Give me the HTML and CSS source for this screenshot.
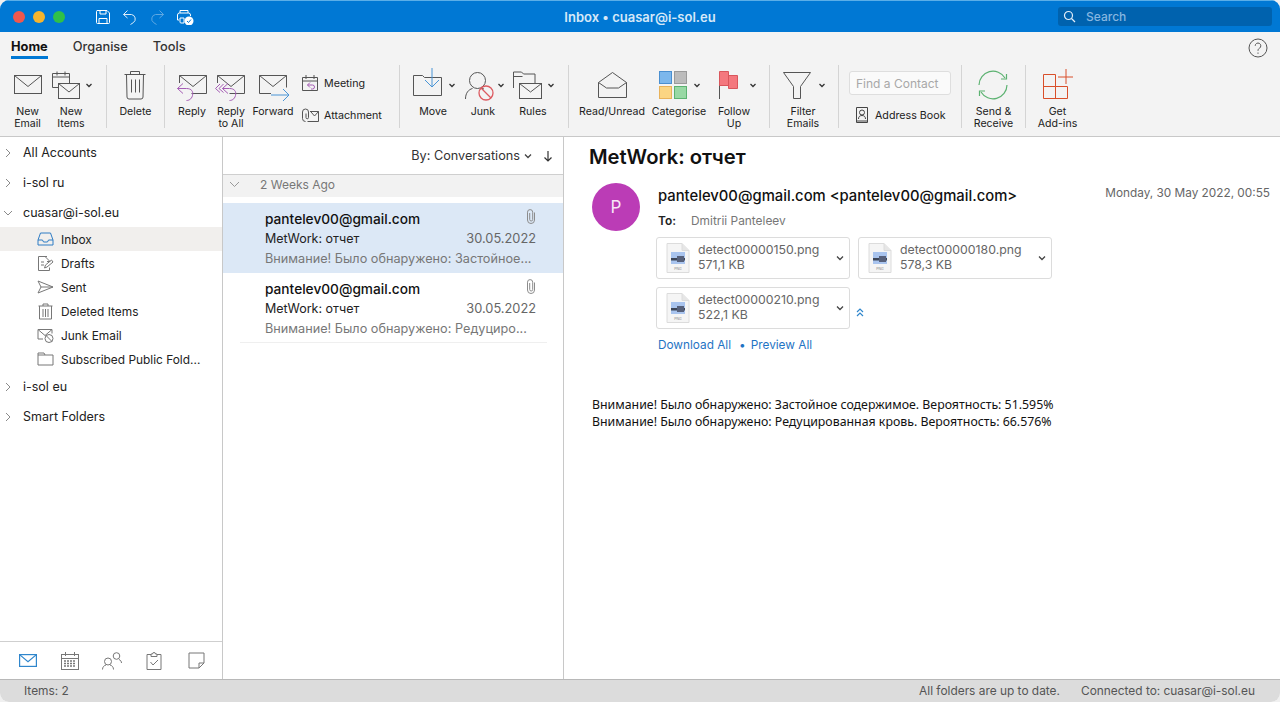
FILE: index.html
```html
<!DOCTYPE html>
<html>
<head>
    <title>Inbox - cuasar@i-sol.eu</title>
    <link rel="stylesheet" href="styles.css">
</head>
<body>
<svg class="defs" width="0" height="0">
    <symbol id="png-file" viewBox="0 0 24 30">
        <path d="M1 .5h15l7 7v22H1z" fill="#f5f5f5" stroke="#dcdcdc"/>
        <path d="M16 .5v7h7" fill="#e6e6e6" stroke="#dcdcdc"/>
        <rect x="5" y="9" width="14" height="12" fill="#a9c4ee"/>
        <rect x="5" y="15" width="14" height="2.5" fill="#3d4658"/>
        <rect x="11" y="13" width="7" height="6" fill="#56607a"/>
    </symbol>
    <symbol id="clip" viewBox="0 0 10 15">
        <path d="M8.500 3.500v7.500a3.500 3.500 0 0 1-7 0V3.200a2.600 2.600 0 0 1 5.200 0V10.500a1.500 1.500 0 0 1-3 0V4" fill="none" stroke="#8c8c8c"/>
    </symbol>
    <symbol id="chev" viewBox="0 0 8 6">
        <path d="M1 1.500l3 3 3-3" fill="none" stroke="#444" stroke-width="1.300"/>
    </symbol>
</svg>

<div class="app">
    <header class="titlebar">
        <div class="lights">
            <span class="light red"></span>
            <span class="light yellow"></span>
            <span class="light green"></span>
        </div>
        <div class="quick">
            <svg width="16" height="16" viewBox="0 0 16 16" fill="none" stroke="#fff"><path d="M2 1.500h10l2.500 2.500v9.500a1 1 0 0 1-1 1h-11a1 1 0 0 1-1-1v-11a1 1 0 0 1 1-1z"/><path d="M5 1.500v3.500h6v-3.500M4 14.500v-5h8v5"/></svg>
            <svg width="16" height="16" viewBox="0 0 16 16" fill="none" stroke="#dcecf9"><path d="M1.500 5.500l4-4M1.500 5.500l4 3.500M1.500 5.500h8a4.500 4.500 0 0 1 2 8l-3 2"/></svg>
            <svg class="dim" width="16" height="16" viewBox="0 0 16 16" fill="none" stroke="#5fa8e2"><path d="M14.500 5.500l-4-4M14.500 5.500l-4 3.500M14.500 5.500h-8a4.500 4.500 0 0 0-2 8l3 2"/></svg>
            <svg width="18" height="16" viewBox="0 0 18 16" fill="none" stroke="#fff"><path d="M4 4v-2.500h8v2.500M3 11h-1.500v-5a2 2 0 0 1 2-2h9a2 2 0 0 1 2 2v1M4 9h4v5h-3a1 1 0 0 1-1-1z"/><circle cx="13" cy="12" r="4.500" fill="#fff" stroke="none"/><path d="M11 12l1.500 1.500 2.500-3" stroke="#0078d4"/></svg>
        </div>
        <div class="title">Inbox • cuasar@i-sol.eu</div>
        <div class="search">
            <svg width="13" height="13" viewBox="0 0 13 13" fill="none" stroke="#e4effa" stroke-width="1.200"><circle cx="5.500" cy="5.500" r="4"/><path d="M8.500 8.500l3.500 3.500"/></svg>
            <span>Search</span>
        </div>
    </header>

    <section class="ribbon">
        <nav class="tabs">
            <a class="tab active">Home</a>
            <a class="tab">Organise</a>
            <a class="tab">Tools</a>
            <svg class="help" width="20" height="20" viewBox="0 0 20 20" fill="none" stroke="#555"><circle cx="10" cy="10" r="9"/><path d="M7.200 7.800a2.800 2.800 0 1 1 4.300 2.400c-1 .7-1.500 1.200-1.500 2.600"/><path d="M10 14.500v1.300"/></svg>
        </nav>
        <div class="toolbar">
            <div class="rb-group g-new">
                <div class="rb-btn w39">
                    <svg viewBox="8 66 39 39" fill="none" stroke="#555"><rect x="14.500" y="75.500" width="27" height="18"/><path d="M14.500 75.500l13.500 11 13.500-11"/></svg>
                    <span>New<br>Email</span>
                </div>
                <div class="rb-btn w48">
                    <svg viewBox="47 66 48 39" fill="none" stroke="#555"><path d="M58 87.500h-5.500v-14h17v9.500M52.500 77h17M57 71.500v4M65 71.500v4"/><rect x="58.500" y="83.500" width="21" height="15" fill="#f4f4f4"/><path d="M58.500 83.500l10.500 8.500 10.500-8.500"/><path d="M86.500 84l2.500 2.500 2.500-2.500" stroke="#333" stroke-width="1.300"/></svg>
                    <span>New<br>Items</span>
                </div>
            </div>
            <div class="rb-group g-delete">
                <div class="rb-btn w57">
                    <svg viewBox="107 66 57 39" fill="none" stroke="#555"><path d="M124.500 74.500h21M130.500 74.500v-3h9v3M126.500 74.500l.5 22.500a2 2 0 0 0 2 2h12a2 2 0 0 0 2-2l.5-22.500M131.500 79.500v13M135.500 79.500v13M139.500 79.500v13"/></svg>
                    <span>Delete</span>
                </div>
            </div>
            <div class="rb-group g-respond">
                <div class="rb-btn w40">
                    <svg viewBox="172 66 40 39" fill="none"><path d="M179.500 83v-7.500h27v18h-15M179.500 75.500l13.500 11 13.500-11" stroke="#555"/><path d="M183 83.500l-5.500 5 5.500 5M177.500 88.500h9c5 0 7 3 6 7s-4 5-6 5" stroke="#a55db5"/></svg>
                    <span>Reply</span>
                </div>
                <div class="rb-btn w38">
                    <svg viewBox="212 66 38 39" fill="none"><path d="M217.500 83v-7.500h27v18h-15M217.500 75.500l13.500 11 13.500-11" stroke="#555"/><path d="M220 84l-4.500 4.500 4.500 4M223.500 84l-4.500 4.500 4.500 4M228 83.500l-5.500 5 5.500 5M222.500 88.500h7c5 0 7 3 6 7s-4 5-6 5" stroke="#a55db5"/></svg>
                    <span>Reply<br>to All</span>
                </div>
                <div class="rb-btn w46">
                    <svg viewBox="250 66 46 39" fill="none"><path d="M271 93.500h-11.500v-18h27v12M259.500 75.500l13.500 11 13.500-11" stroke="#555"/><path d="M271 95h17.500M283 89l6 6-6 6" stroke="#4a95d6"/></svg>
                    <span>Forward</span>
                </div>
                <div class="small-col">
                    <div class="small-btn">
                        <svg width="18" height="18" viewBox="0 0 18 18" fill="none" stroke="#555"><path d="M1.500 3.500h15v13h-15zM1.500 7h15M5 1v4M13 1v4"/><path d="M9 8.500l-2.500 2.500 2.500 2.500M6.500 11h5a1.500 1.500 0 0 1 0 4h-1.500" stroke="#a55db5"/></svg>
                        <span>Meeting</span>
                    </div>
                    <div class="small-btn">
                        <svg width="18" height="18" viewBox="0 0 18 18" fill="none" stroke="#555"><path d="M9 5.500h8.500v10h-11M10 6l3.500 4 4-4.500"/><path d="M5 7.500v4a1 1 0 0 0 2.500 0V6a3 3 0 0 0-6 0v6.500a3 3 0 0 0 3 3"/></svg>
                        <span>Attachment</span>
                    </div>
                </div>
            </div>
            <div class="rb-group g-move">
                <div class="rb-btn w66">
                    <svg viewBox="400 66 66 39" fill="none"><path d="M413.500 95.500v-20h9l2 2h17v18z" stroke="#555"/><path d="M432 68v18M425 80l7 7 7-7" stroke="#4a95d6"/><path d="M449.500 84l2.500 2.500 2.500-2.500" stroke="#333" stroke-width="1.300"/></svg>
                    <span>Move</span>
                </div>
                <div class="rb-btn w34">
                    <svg viewBox="466 66 34 39" fill="none"><circle cx="477.500" cy="80.500" r="8" stroke="#555"/><path d="M465.500 99c0-6 3-9.500 7-10.500M482 88.500l2 .5" stroke="#555"/><circle cx="486" cy="93" r="7" stroke="#dc5a60" stroke-width="1.300"/><path d="M481 88l10 10" stroke="#dc5a60" stroke-width="1.300"/><path d="M498.500 84l2.500 2.500 2.500-2.500" stroke="#333" stroke-width="1.300"/></svg>
                    <span>Junk</span>
                </div>
                <div class="rb-btn w66">
                    <svg viewBox="500 66 66 39" fill="none" stroke="#555"><path d="M513.500 88v-16h8l2 2h11.500v9"/><path d="M513.500 76.500h9"/><rect x="519.500" y="83.500" width="22" height="15" fill="#f4f4f4"/><path d="M519.500 83.500l11 8.500 11-8.500"/><path d="M548.500 84l2.500 2.500 2.500-2.500" stroke="#333" stroke-width="1.300"/></svg>
                    <span>Rules</span>
                </div>
            </div>
            <div class="rb-group g-tags">
                <div class="rb-btn w80">
                    <svg viewBox="572 66 80 39" fill="none" stroke="#555"><path d="M598.500 97.500v-15l14-10 14 10v15z"/><path d="M598.500 82.500l8 5.500h12l8-5.500"/></svg>
                    <span>Read/Unread</span>
                </div>
                <div class="rb-btn w54">
                    <svg viewBox="652 66 54 39"><rect x="659.500" y="71.500" width="12" height="12" fill="#7cb7ec" stroke="#4a8fd0"/><rect x="674.500" y="71.500" width="12" height="12" fill="#bcbcbc" stroke="#9a9a9a"/><rect x="659.500" y="86.500" width="12" height="12" fill="#fbd583" stroke="#e8b25a"/><rect x="674.500" y="86.500" width="12" height="12" fill="#98d8a4" stroke="#5cb271"/><path d="M694.500 84l2.500 2.500 2.500-2.500" fill="none" stroke="#333" stroke-width="1.300"/></svg>
                    <span>Categorise</span>
                </div>
                <div class="rb-btn w56">
                    <svg viewBox="706 66 56 39" fill="none"><path d="M719.500 72v27" stroke="#555"/><path d="M728.500 75.500h9v13h-9z" fill="#f4787e" stroke="#d9565c"/><path d="M719.500 71.500h9v14h-9z" fill="#f4787e" stroke="#d9565c"/><path d="M750.500 84l2.500 2.500 2.500-2.500" stroke="#333" stroke-width="1.300"/></svg>
                    <span>Follow<br>Up</span>
                </div>
            </div>
            <div class="rb-group g-filter">
                <div class="rb-btn w66">
                    <svg viewBox="770 66 66 39" fill="none"><path d="M783.500 72.500h27l-10 14v12h-7v-12z" stroke="#555"/><path d="M819.500 84l2.500 2.500 2.500-2.500" stroke="#333" stroke-width="1.300"/></svg>
                    <span>Filter<br>Emails</span>
                </div>
            </div>
            <div class="rb-group g-find">
                <div class="find-box">Find a Contact</div>
                <div class="small-btn">
                    <svg width="14" height="18" viewBox="0 0 14 18" fill="none" stroke="#444"><path d="M1.500 1.500h11v13.500h-11zM1.500 15v1.500h11V15"/><circle cx="7" cy="6.500" r="2.500"/><path d="M3.500 13c0-2.500 1.500-3.500 3.500-3.500s3.500 1 3.500 3.500"/></svg>
                    <span>Address Book</span>
                </div>
            </div>
            <div class="rb-group g-send">
                <div class="rb-btn w63">
                    <svg viewBox="962 66 63 39" fill="none" stroke="#5cb271" stroke-width="1.200"><path d="M979 85a14 14 0 0 1 26-7M1007 85a14 14 0 0 1-26 7"/><path d="M1006.500 74v5h-5.500M979.500 96v-5h5.500"/></svg>
                    <span>Send &amp;<br>Receive</span>
                </div>
            </div>
            <div class="rb-group g-addins">
                <div class="rb-btn w63">
                    <svg viewBox="1026 66 63 39" fill="none" stroke="#d94f2a"><path d="M1043.500 74.500h12v12h12v12h-24zM1043.500 86.500h12v12"/><path d="M1066 69v15M1058 77h15"/></svg>
                    <span>Get<br>Add-ins</span>
                </div>
            </div>
        </div>
    </section>

    <main class="panes">
        <aside class="sidebar">
            <div class="tree">
                <div class="account"><svg width="6" height="10" viewBox="0 0 6 10" fill="none" stroke="#8a8a8a"><path d="M1 1l4 4-4 4"/></svg><span>All Accounts</span></div>
                <div class="account"><svg width="6" height="10" viewBox="0 0 6 10" fill="none" stroke="#8a8a8a"><path d="M1 1l4 4-4 4"/></svg><span>i-sol ru</span></div>
                <div class="account open"><svg width="10" height="6" viewBox="0 0 10 6" fill="none" stroke="#8a8a8a"><path d="M1 1l4 4 4-4"/></svg><span>cuasar@i-sol.eu</span></div>
                <div class="folder selected">
                    <svg width="17" height="14" viewBox="0 0 17 14" fill="none" stroke="#2f7cc4"><path d="M1 8l2.500-7h10l2.500 7v5h-15zM1 8h4.500l1 2h4l1-2h4.500"/></svg>
                    <span>Inbox</span>
                </div>
                <div class="folder">
                    <svg width="17" height="17" viewBox="0 0 17 17" fill="none" stroke="#777"><path d="M10 1.500h-8.500v14h11v-3M8 1.500l5 5h-3"/><path d="M4 7h3M4 10h3M7.500 13l1-3 6-5 1.500 2-6 5z"/></svg>
                    <span>Drafts</span>
                </div>
                <div class="folder">
                    <svg width="17" height="14" viewBox="0 0 17 14" fill="none" stroke="#777"><path d="M1 1l15 6-15 6 3-6zM4 7h12"/></svg>
                    <span>Sent</span>
                </div>
                <div class="folder">
                    <svg width="15" height="17" viewBox="0 0 15 17" fill="none" stroke="#777"><path d="M.5 3h14M5 3v-2h5v2M1.500 3v13h12v-13M5 6v8M7.500 6v8M10 6v8"/></svg>
                    <span>Deleted Items</span>
                </div>
                <div class="folder">
                    <svg width="17" height="15" viewBox="0 0 17 15" fill="none" stroke="#777"><path d="M6 11h-5v-9.500h14v4M1 1.500l7 6 7-6"/><circle cx="12" cy="10.500" r="4"/><path d="M9 7.500l6 6"/></svg>
                    <span>Junk Email</span>
                </div>
                <div class="folder">
                    <svg width="17" height="14" viewBox="0 0 17 14" fill="none" stroke="#777"><path d="M1 13v-12h6l1 2h8v10zM1 3h7"/></svg>
                    <span>Subscribed Public Fold...</span>
                </div>
                <div class="account"><svg width="6" height="10" viewBox="0 0 6 10" fill="none" stroke="#8a8a8a"><path d="M1 1l4 4-4 4"/></svg><span>i-sol eu</span></div>
                <div class="account"><svg width="6" height="10" viewBox="0 0 6 10" fill="none" stroke="#8a8a8a"><path d="M1 1l4 4-4 4"/></svg><span>Smart Folders</span></div>
            </div>
            <div class="switcher">
                <svg width="18" height="13" viewBox="0 0 18 13" fill="none" stroke="#2f86cc" stroke-width="1.200"><rect x=".6" y=".6" width="16.800" height="11.800"/><path d="M.6.600l8.400 7 8.400-7"/></svg>
                <svg width="18" height="18" viewBox="0 0 18 18" fill="none" stroke="#777"><rect x=".5" y="2.500" width="17" height="15"/><path d="M.5 6.500h17M4.500 0v4M13.500 0v4"/><path d="M3 9h12M3 11.500h12M3 14h12" stroke-dasharray="2 1" stroke-width="1.500"/></svg>
                <svg width="20" height="18" viewBox="0 0 20 18" fill="none" stroke="#777"><circle cx="6" cy="9.500" r="3.500"/><path d="M.5 17.500c0-2.500 1.500-4 3.500-4.500M11.500 17.500c0-2.500-1.500-4-3.500-4.500"/><circle cx="14.500" cy="4" r="3.300"/><path d="M17 7.500c1.500.5 2.500 2 2.500 3.500"/></svg>
                <svg width="16" height="18" viewBox="0 0 16 18" fill="none" stroke="#777"><path d="M5 2.500h-4v15h14v-15h-4M5 4.500v-2.500h1.500a1.500 1.500 0 0 1 3 0h1.500v2.500z"/><path d="M4.500 10l2.500 3 5-5"/></svg>
                <svg width="17" height="17" viewBox="0 0 17 17" fill="none" stroke="#777"><path d="M1 1h15v10l-5 5h-10zM16 11h-5v5"/></svg>
            </div>
        </aside>

        <section class="list">
            <div class="list-head">
                <span>By: Conversations</span>
                <svg width="8" height="6"><use href="#chev"/></svg>
                <svg class="sort" width="10" height="12" viewBox="0 0 10 12" fill="none" stroke="#333" stroke-width="1.200"><path d="M5 1v10M1.500 7.500l3.500 3.500 3.500-3.500"/></svg>
            </div>
            <div class="group-row">
                <svg width="11" height="7" viewBox="0 0 11 7" fill="none" stroke="#999"><path d="M1 1l4.500 4.500 4.500-4.500"/></svg>
                <span>2 Weeks Ago</span>
            </div>
            <div class="msg selected">
                <div class="msg-top"><span class="sender">pantelev00@gmail.com</span><svg width="10" height="15"><use href="#clip"/></svg></div>
                <div class="msg-mid"><span>MetWork: отчет</span><span class="msg-date">30.05.2022</span></div>
                <div class="msg-preview">Внимание! Было обнаружено: Застойное...</div>
            </div>
            <div class="msg">
                <div class="msg-top"><span class="sender">pantelev00@gmail.com</span><svg width="10" height="15"><use href="#clip"/></svg></div>
                <div class="msg-mid"><span>MetWork: отчет</span><span class="msg-date">30.05.2022</span></div>
                <div class="msg-preview">Внимание! Было обнаружено: Редуциро...</div>
            </div>
        </section>

        <article class="reader">
            <h1 class="subject">MetWork: отчет</h1>
            <div class="mail-head">
                <div class="avatar">P</div>
                <div class="mail-info">
                    <div class="from-row">
                        <span class="from">pantelev00@gmail.com &lt;pantelev00@gmail.com&gt;</span>
                        <span class="sent-date">Monday, 30 May 2022, 00:55</span>
                    </div>
                    <div class="to-row"><b>To:</b><span>Dmitrii Panteleev</span></div>
                    <div class="attachments">
                        <div class="att">
                            <svg width="24" height="30" viewBox="0 0 24 30"><use href="#png-file" width="24" height="30"/><text x="12" y="27" class="png-label">PNG</text></svg>
                            <div class="att-text"><div>detect00000150.png</div><div>571,1 KB</div></div>
                            <svg class="att-chev" width="8" height="6"><use href="#chev"/></svg>
                        </div>
                        <div class="att">
                            <svg width="24" height="30" viewBox="0 0 24 30"><use href="#png-file" width="24" height="30"/><text x="12" y="27" class="png-label">PNG</text></svg>
                            <div class="att-text"><div>detect00000180.png</div><div>578,3 KB</div></div>
                            <svg class="att-chev" width="8" height="6"><use href="#chev"/></svg>
                        </div>
                        <div class="att">
                            <svg width="24" height="30" viewBox="0 0 24 30"><use href="#png-file" width="24" height="30"/><text x="12" y="27" class="png-label">PNG</text></svg>
                            <div class="att-text"><div>detect00000210.png</div><div>522,1 KB</div></div>
                            <svg class="att-chev" width="8" height="6"><use href="#chev"/></svg>
                        </div>
                        <svg class="collapse" width="8" height="9" viewBox="0 0 8 9" fill="none" stroke="#2f86cc" stroke-width="1.200"><path d="M1 4l3-3 3 3M1 8l3-3 3 3"/></svg>
                    </div>
                    <div class="att-links"><a>Download All</a><i>•</i><a>Preview All</a></div>
                </div>
            </div>
            <div class="mail-body">
                <p>Внимание! Было обнаружено: Застойное содержимое. Вероятность: 51.595%</p>
                <p>Внимание! Было обнаружено: Редуцированная кровь. Вероятность: 66.576%</p>
            </div>
        </article>
    </main>

    <footer class="statusbar">
        <span class="items">Items: 2</span>
        <span class="sync">All folders are up to date.</span>
        <span class="conn">Connected to: cuasar@i-sol.eu</span>
    </footer>
</div>
</body>
</html>
```

FILE: styles.css
```css
* {
    box-sizing: border-box;
}

html, body {
    margin: 0;
    height: 100%;
    overflow: hidden;
    background: #f0f0f0;
}

body {
    font-family: Inter, "Noto Sans", sans-serif;
    font-size: 12px;
    color: #222;
}

.defs {
    position: absolute;
}

.png-label {
    font-size: 3.5px;
    fill: #888;
    text-anchor: middle;
}

.app {
    display: flex;
    flex-direction: column;
    height: 702px;
    background: #fff;
    border-radius: 9px;
    overflow: hidden;
}

/* title bar */
.titlebar {
    position: relative;
    display: flex;
    align-items: center;
    flex: 0 0 32px;
    background: #0078d4;
    border-top: 1px solid #5aaee8;
    color: #fff;
}

.lights {
    display: flex;
    gap: 8px;
    margin-left: 13px;
}

.light {
    width: 12px;
    height: 12px;
    border-radius: 50%;
}

.red { background: #f0584e; }
.yellow { background: #f6b52e; }
.green { background: #30c048; }

.quick {
    display: flex;
    align-items: center;
    gap: 11px;
    margin-left: 30px;
}

.title {
    position: absolute;
    left: 0;
    right: 0;
    text-align: center;
    font-size: 13px;
    font-weight: 600;
    color: #d5e8f8;
}

.search {
    position: relative;
    display: flex;
    align-items: center;
    gap: 10px;
    width: 214px;
    height: 19px;
    margin-left: auto;
    margin-right: 8px;
    padding-left: 5px;
    background: #0062ae;
    border-radius: 3px;
    color: #86b6e0;
    font-weight: 500;
}

/* ribbon */
.ribbon {
    flex: 0 0 105px;
    background: #f3f3f3;
    border-bottom: 1px solid #c8c8c8;
}

.tabs {
    display: flex;
    height: 33px;
    padding: 0 0 0 11px;
}

.tab {
    height: 27px;
    margin-right: 25px;
    padding-top: 7px;
    font-size: 12.8px;
    line-height: 15px;
    font-weight: 500;
    color: #333;
}

.tab.active {
    font-weight: 700;
    color: #111;
    border-bottom: 3px solid #0078d4;
}

.help {
    margin: 6px 12px 0 auto;
}

.toolbar {
    display: flex;
    height: 63px;
}

.rb-group {
    display: flex;
    height: 63px;
    border-right: 1px solid #d4d4d4;
}

.g-new { width: 107px; padding-left: 8px; }
.g-delete { width: 58px; }
.g-respond { width: 235px; padding-left: 7px; }
.g-move { width: 169px; }
.g-tags { width: 201px; padding-left: 3px; }
.g-filter { width: 69px; }
.g-find { width: 123px; padding-left: 10px; flex-direction: column; }
.g-send { width: 64px; }
.g-addins { width: 64px; border-right: 0; }

.rb-btn {
    display: flex;
    flex-direction: column;
    align-items: center;
    padding-top: 1px;
    font-size: 10.6px;
    line-height: 12px;
    text-align: center;
    white-space: nowrap;
    color: #222;
}

.rb-btn svg {
    flex: 0 0 39px;
    width: 100%;
    height: 39px;
    overflow: visible;
}

.rb-btn span {
    display: block;
    margin-top: 1px;
}

.w34 { width: 34px; }
.w38 { width: 38px; }
.w39 { width: 39px; }
.w40 { width: 40px; }
.w46 { width: 46px; }
.w48 { width: 48px; }
.w54 { width: 54px; }
.w56 { width: 56px; }
.w57 { width: 57px; }
.w63 { width: 63px; }
.w66 { width: 66px; }
.w80 { width: 80px; }

.small-col {
    display: flex;
    flex-direction: column;
    gap: 14px;
    margin-left: 5px;
    padding-top: 9px;
}

.small-btn {
    display: flex;
    align-items: center;
    gap: 5px;
    height: 18px;
    font-size: 10.7px;
    white-space: nowrap;
}

.find-box {
    width: 102px;
    height: 24px;
    margin-top: 6px;
    margin-bottom: 11px;
    padding: 4px 6px;
    background: #fafafa;
    border: 1px solid #dedede;
    border-radius: 3px;
    font-size: 12px;
    color: #a8a8a8;
}

.g-find .small-btn {
    gap: 6px;
    margin-left: 6px;
}

/* three panes */
.panes {
    display: flex;
    flex: 1;
    min-height: 0;
}

.sidebar {
    display: flex;
    flex-direction: column;
    flex: 0 0 223px;
    border-right: 1px solid #c8c8c8;
}

.tree {
    flex: 1;
}

.account {
    display: flex;
    align-items: center;
    height: 30px;
    padding-left: 5px;
    font-size: 12.5px;
    color: #222;
}

.account svg {
    margin-top: 2px;
}

.account span {
    margin-left: 12px;
}

.account.open {
    padding-left: 3px;
}

.account.open span {
    margin-left: 10px;
}

.folder {
    position: relative;
    display: flex;
    align-items: center;
    height: 24px;
    padding-left: 37px;
    font-size: 11.9px;
}

.folder svg {
    flex: 0 0 17px;
}

.folder span {
    position: absolute;
    left: 61px;
}

.folder.selected {
    background: #f1efed;
}

.switcher {
    display: grid;
    grid-template-columns: repeat(5, 42px);
    align-items: center;
    justify-items: center;
    flex: 0 0 38px;
    padding-left: 7px;
    border-top: 1px solid #cfcfcf;
}

.list {
    flex: 0 0 341px;
    border-right: 1px solid #c8c8c8;
}

.list-head {
    display: flex;
    align-items: center;
    justify-content: flex-end;
    height: 37px;
    padding-right: 10px;
    font-size: 12.7px;
    color: #333;
}

.list-head svg {
    margin-left: 4px;
}

.list-head .sort {
    margin-left: 11px;
}

.group-row {
    display: flex;
    align-items: center;
    height: 23px;
    padding: 0 0 3px 6px;
    background: #f2f2f2;
    border-top: 1px solid #cfcfcf;
    font-size: 12px;
    color: #777;
}

.group-row span {
    margin-left: 20px;
}

.msg {
    height: 70px;
    margin-left: 0;
    padding: 7px 27px 0 42px;
    position: relative;
}

.group-row + .msg {
    margin-top: 6px;
}

.msg.selected {
    background: #dce8f6;
}

.msg:not(.selected)::after {
    content: "";
    position: absolute;
    left: 17px;
    right: 16px;
    bottom: 0;
    border-bottom: 1px solid #efefef;
}

.msg-top, .msg-mid {
    display: flex;
    justify-content: space-between;
}

.msg-top {
    height: 19px;
    align-items: flex-start;
}

.msg-top svg {
    margin-top: -1px;
}

.sender {
    font-size: 13.7px;
    font-weight: 500;
    line-height: 18px;
    color: #111;
}

.msg-mid {
    height: 20px;
    line-height: 20px;
    font-size: 12.5px;
    color: #222;
}

.msg-date {
    color: #666;
    font-size: 12.8px;
}

.msg-preview {
    font-size: 12.7px;
    line-height: 20px;
    white-space: nowrap;
    color: #777;
}

.reader {
    flex: 1;
    padding: 7px 10px 0 25px;
}

.subject {
    margin: 0 0 13px;
    font-size: 20.2px;
    line-height: 26px;
    font-weight: 600;
    color: #111;
}

.mail-head {
    display: flex;
}

.avatar {
    display: flex;
    align-items: center;
    justify-content: center;
    flex: 0 0 48px;
    height: 48px;
    margin-left: 3px;
    background: #bb3cb6;
    border-radius: 50%;
    color: #f8e6f6;
    font-size: 17px;
}

.mail-info {
    flex: 1;
    margin-left: 18px;
}

.from-row {
    display: flex;
    justify-content: space-between;
    height: 27px;
    margin-top: 2px;
}

.from {
    font-size: 14.8px;
    font-weight: 500;
    line-height: 22px;
    color: #111;
}

.sent-date {
    font-size: 11.8px;
    line-height: 16px;
    color: #666;
}

.to-row {
    display: flex;
    height: 18px;
    line-height: 18px;
    font-size: 11.9px;
}

.to-row b {
    width: 33px;
    font-weight: 600;
}

.to-row span {
    color: #777;
}

.attachments {
    display: flex;
    flex-wrap: wrap;
    align-items: center;
    gap: 8px;
    width: 400px;
    margin: 7px 0 0 -2px;
}

.att {
    display: flex;
    align-items: center;
    width: 194px;
    height: 42px;
    padding: 0 5px 0 9px;
    background: #fff;
    border: 1px solid #dcdcdc;
    border-radius: 3px;
}

.att-text {
    flex: 1;
    margin: -2px 0 0 8px;
    font-size: 12.3px;
    line-height: 15px;
    color: #666;
}

.collapse {
    margin: 8px 0 0 -2px;
}

.att-links {
    display: flex;
    margin-top: 8px;
    font-size: 11.8px;
    line-height: 16px;
    color: #1f74c4;
}

.att-links i {
    margin: 0 5px 0 8px;
    font-style: normal;
}

.mail-body {
    margin: 43px 0 0 3px;
    font-family: "Noto Sans", sans-serif;
    font-size: 12.35px;
    line-height: 17px;
    color: #111;
}

.mail-body p {
    margin: 0;
}

/* status bar */
.statusbar {
    display: flex;
    align-items: center;
    flex: 0 0 23px;
    padding: 0 25px 2px 24px;
    background: #dcdcdc;
    border-top: 1px solid #b8b8b8;
    font-size: 11.9px;
    color: #555;
}

.sync {
    margin-left: auto;
}

.conn {
    margin-left: 21px;
}
```
